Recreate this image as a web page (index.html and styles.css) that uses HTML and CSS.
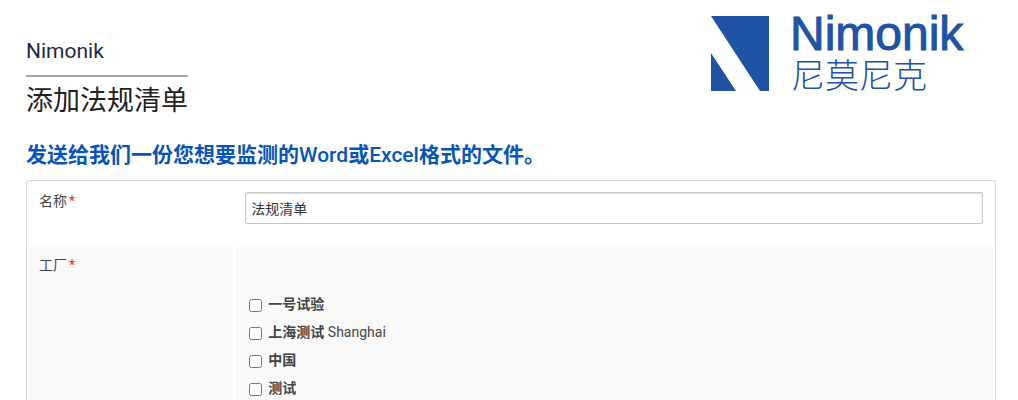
FILE: index.html
```html
<!DOCTYPE html>
<html lang="zh-CN">
<head>
<meta charset="utf-8">
<meta name="viewport" content="width=device-width, initial-scale=1">
<title>添加法规清单</title>
<link rel="stylesheet" href="styles.css">
</head>
<body>
<header class="header">
  <div class="titles">
    <p class="company">Nimonik</p>
    <h1 class="title">添加法规清单</h1>
  </div>
  <svg class="logo" width="256" height="84" viewBox="0 0 256 84" role="img" aria-label="Nimonik 尼莫尼克">
    <path d="M0 0H58V75H49ZM0 37L25 75H0Z"/>
    <text class="logo-name" x="79" y="34">Nimonik</text>
    <text class="logo-local" x="80" y="72">尼莫尼克</text>
  </svg>
</header>
<main class="main">
  <h2 class="lead">发送给我们一份您想要监测的<span class="latin">Word</span>或<span class="latin">Excel</span>格式的文件。</h2>
  <form class="panel">
    <div class="row">
      <div class="cell"><label for="name">名称<span class="required">*</span></label></div>
      <div class="cell field"><input class="text" id="name" type="text" value="法规清单"></div>
    </div>
    <div class="row shaded">
      <div class="cell" id="plants">工厂<span class="required">*</span></div>
      <div class="cell options" role="group" aria-labelledby="plants">
        <label class="option"><input class="check" type="checkbox"><span><b>一号试验</b></span></label>
        <label class="option"><input class="check" type="checkbox"><span><b>上海测试</b> Shanghai</span></label>
        <label class="option"><input class="check" type="checkbox"><span><b>中国</b></span></label>
        <label class="option"><input class="check" type="checkbox"><span><b>测试</b></span></label>
      </div>
    </div>
  </form>
</main>
</body>
</html>
```
FILE: styles.css
```css
* {
  box-sizing: border-box;
}

body {
  display: flex;
  flex-direction: column;
  min-height: 100vh;
  margin: 0;
  padding: 0 22px 0 26px;
  background: #fff;
  color: #444;
  font: 14px/20px Roboto, "Noto Sans CJK SC", sans-serif;
}

.header {
  display: flex;
  justify-content: space-between;
  padding: 16px 29px 0 0;
}

.titles {
  padding-top: 22px;
}

.company {
  margin: 0;
  padding-bottom: 11px;
  border-bottom: 2px solid #a6a6a6;
  color: #1c2b45;
  font-size: 21px;
  line-height: 26px;
}

.title {
  margin: 4px 0 0;
  color: #222;
  font-size: 27px;
  font-weight: 400;
  line-height: 40px;
}

.logo {
  fill: #2053a4;
  overflow: visible;
}

.logo-name {
  font: 48px "Liberation Sans", sans-serif;
  stroke: #2053a4;
  stroke-width: 1px;
}

.logo-local {
  font: 300 34px "Noto Sans CJK SC", sans-serif;
}

.main {
  display: flex;
  flex: 1;
  flex-direction: column;
}

.lead {
  margin: 19px 0 9px;
  color: #0755b8;
  font-size: 21px;
  font-weight: 700;
  line-height: 31px;
}

.latin {
  font-weight: 500;
}

.panel {
  display: flex;
  flex: 1;
  flex-direction: column;
  gap: 2px;
  padding: 2px 2px 0;
  border: 1px solid #d9d9d9;
  border-bottom: 0;
  border-radius: 3px 3px 0 0;
}

.row {
  display: grid;
  grid-template-columns: 21.2% 1fr;
  gap: 2px;
  min-height: 62px;
}

.shaded {
  flex: 1;
}

.shaded .cell {
  background: #f9f9f9;
}

.cell {
  padding: 8px 10px;
}

.required {
  margin-left: 2px;
  color: #f21d1d;
}

.field {
  padding-top: 9px;
}

.text {
  width: 100%;
  height: 32px;
  padding: 0 5px;
  border: 1px solid #c8c8c8;
  border-radius: 2px;
  box-shadow: inset 0 1px 2px #ddd;
  background: #fff;
  color: #333;
  font: inherit;
}

.options {
  display: flex;
  flex-direction: column;
  gap: 8px;
  padding: 47px 14px 0;
}

.option {
  display: flex;
  align-items: center;
  gap: 6px;
}

.check {
  width: 13px;
  height: 13px;
  margin: 3px 0 0;
}
```
